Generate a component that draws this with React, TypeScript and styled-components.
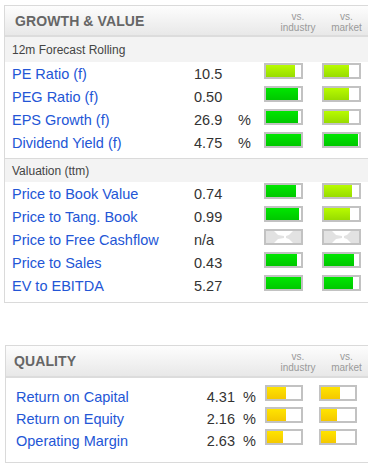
import styled, { createGlobalStyle } from 'styled-components';

type Tone = 'lime' | 'green' | 'yellow';

interface Metric {
  label: string;
  value: string;
  unit?: string;
  industry: number | null;
  market: number | null;
  tone: [Tone, Tone];
}

const forecast: Metric[] = [
  { label: 'PE Ratio (f)', value: '10.5', industry: 84, market: 72, tone: ['lime', 'lime'] },
  { label: 'PEG Ratio (f)', value: '0.50', industry: 90, market: 72, tone: ['green', 'lime'] },
  { label: 'EPS Growth (f)', value: '26.9', unit: '%', industry: 90, market: 72, tone: ['green', 'lime'] },
  { label: 'Dividend Yield (f)', value: '4.75', unit: '%', industry: 100, market: 98, tone: ['green', 'green'] },
];

const valuation: Metric[] = [
  { label: 'Price to Book Value', value: '0.74', industry: 87, market: 80, tone: ['green', 'lime'] },
  { label: 'Price to Tang. Book', value: '0.99', industry: 95, market: 75, tone: ['green', 'lime'] },
  { label: 'Price to Free Cashflow', value: 'n/a', industry: null, market: null, tone: ['green', 'green'] },
  { label: 'Price to Sales', value: '0.43', industry: 89, market: 87, tone: ['green', 'green'] },
  { label: 'EV to EBITDA', value: '5.27', industry: 100, market: 84, tone: ['green', 'green'] },
];

const quality: Metric[] = [
  { label: 'Return on Capital', value: '4.31', unit: '%', industry: 57, market: 55, tone: ['yellow', 'yellow'] },
  { label: 'Return on Equity', value: '2.16', unit: '%', industry: 55, market: 46, tone: ['yellow', 'yellow'] },
  { label: 'Operating Margin', value: '2.63', unit: '%', industry: 47, market: 44, tone: ['yellow', 'yellow'] },
];

const fills: Record<Tone, string> = {
  lime: 'linear-gradient(#b8fb00, #98dc00)',
  green: 'linear-gradient(#00e600, #00c800)',
  yellow: 'linear-gradient(#ffe400, #f4c800)',
};

const GlobalStyle = createGlobalStyle`
  html, body {
    margin: 0;
    padding: 0;
    background: #fff;
    overflow: hidden;
    font-family: "Liberation Sans", Arial, sans-serif;
  }
`;

const Page = styled.div`
  padding: 5px 0 0 4px;
`;

const Card = styled.section<{ $shift?: number; $top?: number }>`
  width: 370px;
  margin-left: ${({ $shift }) => $shift ?? 0}px;
  margin-top: ${({ $top }) => $top ?? 0}px;
  border: 1px solid #dadada;
  background: #fff;
`;

const CardHeader = styled.header<{ $height: number; $titleWidth: number; $pad: number }>`
  display: grid;
  grid-template-columns: ${({ $titleWidth }) => $titleWidth}px 48px 49px;
  align-items: center;
  height: ${({ $height }) => $height}px;
  padding-left: ${({ $pad }) => $pad}px;
  background: linear-gradient(#fdfdfd, #e8e8e8);
  border-bottom: 2px solid #dcdcdc;
`;

const Title = styled.h2`
  margin: 0;
  font-size: 14px;
  font-weight: bold;
  color: #666;
  letter-spacing: 0.1px;
`;

const VsLabel = styled.div`
  font-size: 10px;
  line-height: 11px;
  color: #9a9a9a;
  text-align: center;
  padding-top: 2px;
`;

const SubHeader = styled.div<{ $height: number }>`
  display: flex;
  align-items: center;
  height: ${({ $height }) => $height}px;
  padding-left: 7px;
  background: #f3f3f3;
  font-size: 12px;
  color: #444;
`;

const Rows = styled.div<{ $top: number; $bottom: number; $pad: number }>`
  padding: ${({ $top }) => $top}px 0 ${({ $bottom }) => $bottom}px ${({ $pad }) => $pad}px;
`;

const Separator = styled.div`
  border-top: 1px solid #dadada;
`;

const Row = styled.div<{ $height: number }>`
  display: flex;
  align-items: center;
  height: ${({ $height }) => $height}px;
`;

const Label = styled.a<{ $width: number }>`
  width: ${({ $width }) => $width}px;
  font-size: 14.5px;
  color: #2356d6;
  text-decoration: none;
  white-space: nowrap;
`;

const Value = styled.span<{ $width: number; $right?: boolean }>`
  width: ${({ $width }) => $width}px;
  font-size: 14.5px;
  color: #333;
  text-align: ${({ $right }) => ($right ? 'right' : 'left')};
`;

const Unit = styled.span<{ $width: number; $pad: number }>`
  width: ${({ $width }) => $width}px;
  box-sizing: border-box;
  padding-left: ${({ $pad }) => $pad}px;
  font-size: 14.5px;
  color: #333;
`;

const Bars = styled.div<{ $gap: number; $offset: number }>`
  display: flex;
  gap: ${({ $gap }) => $gap}px;
  align-self: flex-start;
  margin-top: ${({ $offset }) => $offset}px;
`;

const Bar = styled.div<{ $width: number }>`
  width: ${({ $width }) => $width}px;
  height: 12px;
  border: 2px solid #c2c2c2;
  background: #fff;
  display: flex;
`;

const Fill = styled.div<{ $tone: Tone }>`
  height: 100%;
  background: ${({ $tone }) => fills[$tone]};
`;

const MissingBar = ({ width }: { width: number }) => (
  <Bar $width={width}>
    <svg width={width} height="12" viewBox="0 0 35 12">
      <polygon points="0,0 8,0 12,4 18,5 18,7 12,8 8,12 0,12" fill="#e2e2e2" />
      <polygon points="35,0 27,0 23,4 20,5 20,7 23,8 27,12 35,12" fill="#e2e2e2" />
    </svg>
  </Bar>
);

interface Layout {
  label: number;
  value: number;
  right?: boolean;
  unit: number;
  unitPad: number;
  bar: number;
  gap: number;
  height: number;
  offset: number;
}

const growthLayout: Layout = { label: 182, value: 44, unit: 26, unitPad: 0, bar: 35, gap: 19, height: 23, offset: 1 };
const qualityLayout: Layout = { label: 170, value: 49, right: true, unit: 30, unitPad: 8, bar: 34, gap: 16, height: 22, offset: -1 };

const MetricRow = ({ m, layout }: { m: Metric; layout: Layout }) => (
  <Row $height={layout.height}>
    <Label href="#" $width={layout.label}>{m.label}</Label>
    <Value $width={layout.value} $right={layout.right}>{m.value}</Value>
    <Unit $width={layout.unit} $pad={layout.unitPad}>{m.unit ?? ''}</Unit>
    <Bars $gap={layout.gap} $offset={layout.offset}>
      {[m.industry, m.market].map((pct, i) =>
        pct === null ? (
          <MissingBar key={i} width={layout.bar} />
        ) : (
          <Bar key={i} $width={layout.bar}>
            <Fill $tone={m.tone[i]} style={{ width: `${pct}%` }} />
          </Bar>
        )
      )}
    </Bars>
  </Row>
);

const VsHeadings = () => (
  <>
    <VsLabel>vs.<br />industry</VsLabel>
    <VsLabel>vs.<br />market</VsLabel>
  </>
);

export default function App() {
  return (
    <Page>
      <GlobalStyle />
      <Card>
        <CardHeader $height={29} $titleWidth={259} $pad={10}>
          <Title>GROWTH &amp; VALUE</Title>
          <VsHeadings />
        </CardHeader>
        <SubHeader $height={25}>12m Forecast Rolling</SubHeader>
        <Rows $top={0} $bottom={4} $pad={7}>
          {forecast.map((m) => (
            <MetricRow key={m.label} m={m} layout={growthLayout} />
          ))}
        </Rows>
        <Separator />
        <SubHeader $height={23}>Valuation (ttm)</SubHeader>
        <Rows $top={0} $bottom={5} $pad={7}>
          {valuation.map((m) => (
            <MetricRow key={m.label} m={m} layout={growthLayout} />
          ))}
        </Rows>
      </Card>

      <Card $shift={1} $top={42}>
        <CardHeader $height={30} $titleWidth={260} $pad={8}>
          <Title>QUALITY</Title>
          <VsHeadings />
        </CardHeader>
        <Rows $top={8} $bottom={10} $pad={10}>
          {quality.map((m) => (
            <MetricRow key={m.label} m={m} layout={qualityLayout} />
          ))}
        </Rows>
      </Card>
    </Page>
  );
}
